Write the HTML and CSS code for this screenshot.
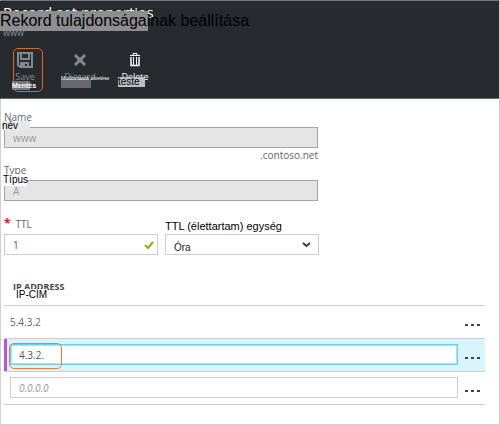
FILE: index.html
```html
<!DOCTYPE html>
<html lang="hu">
<head>
<meta charset="utf-8">
<title>Rekord tulajdonságainak beállítása</title>
<link rel="stylesheet" href="styles.css">
</head>
<body>
<main class="blade">
  <header class="head">
    <h1 class="title">Record set properties</h1>
    <span class="title-tr"><span class="title-band"></span><span class="title-text">Rekord tulajdonságainak beállítása</span></span>
    <p class="subtitle">www</p>
    <div class="toolbar">
      <button class="tool dim marked" type="button">
        <svg width="16" height="16" viewBox="0 0 16 16"><path d="M1 1h14v14H3l-2-2zM4 1v6h8V1M4 15v-4h7v4" fill="none" stroke="currentColor" stroke-width="2"/><path d="M5 11h3v4H5z" fill="currentColor"/></svg>
        <span>Save</span>
        <span class="tr tr-save">Mentés</span>
      </button>
      <button class="tool dim" type="button">
        <svg width="16" height="16" viewBox="0 0 16 16"><path d="M3 3l10 10M13 3L3 13" fill="none" stroke="currentColor" stroke-width="3"/></svg>
        <span>Discard</span>
        <span class="tr tr-discard">Módosítások elvetése</span>
      </button>
      <button class="tool" type="button">
        <svg width="16" height="16" viewBox="0 0 16 16" fill="none" stroke="currentColor"><path d="M3 3.500h10M6 3V1.500h4V3"/><path d="M4 5v8.500h8V5" stroke-width="1.500"/><path d="M6.500 5v8M9.500 5v8"/></svg>
        <span>Delete</span>
        <span class="tr tr-delete">teste</span>
      </button>
    </div>
  </header>
  <form class="form">
    <div class="field">
      <label for="name">Name</label>
      <span class="tr tr-name">név</span>
      <input id="name" class="box" value="www" disabled>
      <span class="suffix">.contoso.net</span>
    </div>
    <div class="field">
      <label for="type">Type</label>
      <span class="tr tr-type">Típus</span>
      <input id="type" class="box" value="A" disabled>
    </div>
    <div class="pair">
      <div class="field">
        <label for="ttl"><span class="req">*</span>TTL</label>
        <input id="ttl" class="box" value="1">
        <svg class="check" width="10" height="9" viewBox="0 0 10 9"><path d="M1 4l3 3 5-6" fill="none" stroke="#7fba00" stroke-width="2"/></svg>
      </div>
      <div class="field">
        <label for="unit" class="unit-label">TTL (élettartam) egység</label>
        <select id="unit" class="box"><option>Óra</option></select>
        <svg class="chevron" width="9" height="6" viewBox="0 0 9 6"><path d="M1 1l3.500 3L8 1" fill="none" stroke="#333b46" stroke-width="2"/></svg>
      </div>
    </div>
    <table class="records">
      <colgroup><col><col class="menu-col"></colgroup>
      <thead><tr><th colspan="2">IP ADDRESS<span class="tr tr-ip">IP-CÍM</span></th></tr></thead>
      <tbody>
        <tr><td>5.4.3.2</td><td class="menu"><button type="button" aria-label="Menu"><i></i><i></i><i></i></button></td></tr>
        <tr class="active"><td><input class="box" aria-label="IP" value="4.3.2."><span class="ring"></span></td><td class="menu"><button type="button" aria-label="Menu"><i></i><i></i><i></i></button></td></tr>
        <tr><td><input class="box" aria-label="IP" placeholder="0.0.0.0"></td><td class="menu"><button type="button" aria-label="Menu"><i></i><i></i><i></i></button></td></tr>
      </tbody>
    </table>
  </form>
</main>
</body>
</html>
```
FILE: styles.css
```css
* { box-sizing: border-box; }
body { margin: 0; font: 10px/14px "Open Sans", "Noto Sans", sans-serif; color: #666; background: #fff; }
.blade { min-height: 100vh; border: 1px solid #d0d0d0; border-top-color: #777; }
button { font: inherit; color: inherit; background: none; border: 0; padding: 0; }
.tr { position: absolute; font-family: "Liberation Sans", Arial, sans-serif; color: #000; white-space: nowrap; }

.head { position: relative; height: 98px; margin-left: -1px; padding: 1px 3px 0; background: #262b30; color: #fff; border-bottom: 1px solid #61717b; }
.title { margin: 0 0 4px; font-size: 15px; line-height: 20px; font-weight: 400; }
.title-tr { position: absolute; left: 0; top: 10px; height: 20px; white-space: nowrap; }
.title-band { position: absolute; left: 0; top: 0; width: 148px; height: 20px; background: #8e8e90; }
.title-text { position: relative; font: 16px/20px "Liberation Sans", Arial, sans-serif; color: #000; }
.subtitle { margin: 0; font-size: 9px; line-height: 14px; color: #8d9093; }
.toolbar { display: flex; gap: 5px; margin: 8px 0 0 -3px; }
.tool { position: relative; isolation: isolate; width: 50px; height: 42px; display: flex; flex-direction: column; align-items: center; gap: 2px; padding-top: 4px; font-size: 9px; }
.dim { color: #85898d; }
.marked::after { content: ""; position: absolute; z-index: -1; left: 13px; top: 0; width: 28px; height: 42px; border: 1px solid #e8651a; border-radius: 5px; }
.tr-save { left: 12px; top: 33px; font-weight: 700; font-size: 7px; line-height: 9px; color: #fff; background: linear-gradient(#777, #777) 0 0 / 18px 9px no-repeat; }
.tr-discard { left: 6px; top: 28px; font-size: 5px; line-height: 5px; color: #fff; }
.tr-discard::before { content: ""; position: absolute; z-index: -1; left: 0; top: 3px; width: 30px; height: 9px; background: #68696c; }
.tr-delete { left: 8px; top: 29px; width: 27px; font-size: 10px; line-height: 10px; text-align: left; background: #bdbdbd; }

.form { padding: 11px 14px 0 3px; }
.field { position: relative; width: 314px; }
.field label { display: block; height: 17px; line-height: 14px; font-size: 10px; }
.box { display: block; width: 100%; height: 21px; padding: 0 8px; border: 1px solid #ccc; background: #fff; font: 10px/18px "Open Sans", "Noto Sans", sans-serif; color: #555; border-radius: 0; outline: 0; }
.box:disabled { background: #e5e5e5; border-color: #a4a4a4; color: #999; }
.suffix { display: block; text-align: right; height: 15px; line-height: 15px; }
.tr-name { left: -2px; top: 11px; width: 28px; background: #e8e8e8; font-size: 10px; line-height: 9px; }
.tr-type { left: -1px; top: 11px; width: 24px; background: #fff; font-size: 10px; line-height: 12px; }
.pair { display: flex; gap: 7px; width: 314px; margin-top: 16px; }
.pair .field { width: 154px; flex: none; }
.req { color: #e81123; margin-right: 5px; font-size: 12px; font-weight: 700; }
.pair .unit-label { color: #000; font-family: "Liberation Sans", Arial, sans-serif; font-size: 11px; line-height: 18px; white-space: nowrap; }
select.box { appearance: none; padding-top: 6px; font: 10px/13px "Liberation Sans", Arial, sans-serif; color: #222; }
.check, .chevron { position: absolute; right: 4px; top: 24px; }
.chevron { right: 8px; top: 25px; }

.records { width: 100%; margin-top: 20px; border-collapse: collapse; table-layout: fixed; }
.menu-col { width: 27px; }
.records th { position: relative; height: 30px; padding: 0 0 0 9px; text-align: left; vertical-align: top; font-size: 9px; line-height: 24px; color: #444; }
.tr-ip { left: 12px; top: 14px; font-size: 10px; line-height: 12px; font-weight: 400; background: #fff; }
.records tr { border-bottom: 1px solid #ccc; }
.records td { position: relative; height: 33px; padding: 5px 0 5px 6px; }
.records td.menu { padding: 7px 0 0 7px; }
.menu button { display: flex; gap: 3px; }
.menu i { width: 3px; height: 2px; background: #444; }
.active { background: #d9f4fc; }
.active td:first-child { box-shadow: inset 3px 0 #c050d4; }
.active .box { border-color: #66d2f2; box-shadow: inset 0 0 0 1px #a5e6f8; }
.box::placeholder { color: #999; font-style: italic; }
.ring { position: absolute; left: 5px; top: 4px; width: 53px; height: 26px; border: 1px solid #f08030; border-radius: 5px; }
```
